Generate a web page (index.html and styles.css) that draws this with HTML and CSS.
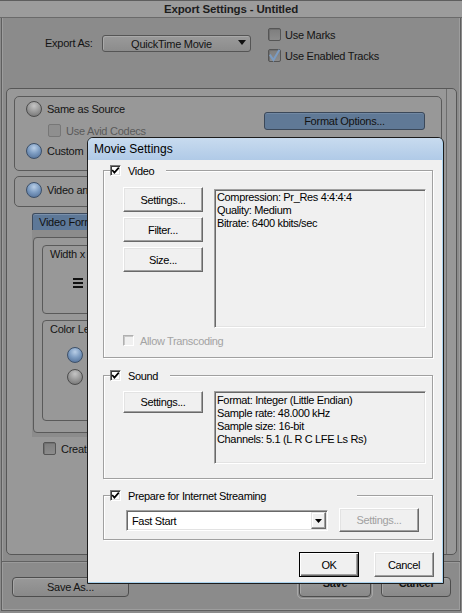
FILE: index.html
```html
<!DOCTYPE html>
<html>
<head>
<meta charset="utf-8">
<title>Export Settings</title>
<link rel="stylesheet" href="styles.css">
</head>
<body>
<div class="win">
  <div class="titlebar">Export Settings - Untitled</div>
  <div class="frame">
    <div class="export-row">
      <span class="export-lbl">Export As:</span>
      <div class="gselect"><span class="gselect-text">QuickTime Movie</span><svg class="garrow" width="8" height="5" viewBox="0 0 8 5"><path d="M0 0H8L4 5Z" fill="#111"/></svg></div>
      <div class="gchecks">
        <div class="gcheck-row"><span class="gbox"></span><span>Use Marks</span></div>
        <div class="gcheck-row row2"><span class="gbox"><svg width="13" height="13" viewBox="0 0 13 13"><polyline points="1.8,5.6 5.4,11 11.4,0.8" fill="none" stroke="#7b9bc1" stroke-width="2"/></svg></span><span>Use Enabled Tracks</span></div>
      </div>
    </div>
    <div class="outer">
      <div class="scroll">
        <div class="panel p1">
          <div class="p1-left">
            <div class="radio-row"><span class="radio"></span><span>Same as Source</span></div>
            <div class="avid-row"><span class="gbox dis"></span><span>Use Avid Codecs</span></div>
            <div class="radio-row custom"><span class="radio blue"></span><span>Custom</span></div>
          </div>
          <div class="fmt-btn">Format Options...</div>
        </div>
        <div class="panel p2">
          <div class="radio-row"><span class="radio blue"></span><span>Video and Audio</span></div>
        </div>
        <div class="tab">Video Format</div>
        <div class="tabwrap">
          <div class="tabpanel">
            <div class="box wbox">
              <div class="box-title">Width x Height</div>
              <div class="bars"><i></i><i></i><i></i></div>
            </div>
            <div class="box cbox">
              <div class="box-title">Color Levels</div>
              <span class="radio blue r-a"></span>
              <span class="radio r-b"></span>
            </div>
          </div>
        </div>
        <div class="create-row"><span class="gbox"></span><span>Create Video Mixdown</span></div>
      </div>
    </div>
    <div class="sep"></div>
    <div class="btn-row">
      <div class="gbtn saveas">Save As...</div>
      <div class="ring"><div class="gbtn save">Save</div></div>
      <div class="gbtn cancel">Cancel</div>
    </div>
  </div>
</div>

<div class="dlg">
  <div class="dlg-title">Movie Settings</div>
  <div class="dlg-body">
    <div class="group g-video">
      <div class="legend lg-video"><span class="wchk"><svg width="9" height="9" viewBox="0 0 9 9"><polyline points="1.2,4 3.4,6.6 7.8,1.6" fill="none" stroke="#000" stroke-width="1.7"/></svg></span><span>Video</span></div>
      <div class="vg-row">
        <div class="btn-col">
          <div class="wbtn vbtn">Settings...</div>
          <div class="wbtn vbtn">Filter...</div>
          <div class="wbtn vbtn">Size...</div>
        </div>
        <div class="info info-video">Compression: Pr_Res 4:4:4:4<br>Quality: Medium<br>Bitrate: 6400 kbits/sec</div>
      </div>
      <div class="allow-row"><span class="wchk dis"></span><span>Allow Transcoding</span></div>
    </div>

    <div class="group g-sound">
      <div class="legend lg-sound"><span class="wchk"><svg width="9" height="9" viewBox="0 0 9 9"><polyline points="1.2,4 3.4,6.6 7.8,1.6" fill="none" stroke="#000" stroke-width="1.7"/></svg></span><span>Sound</span></div>
      <div class="sg-row">
        <div class="wbtn sbtn">Settings...</div>
        <div class="info info-sound">Format: Integer (Little Endian)<br>Sample rate: 48.000 kHz<br>Sample size: 16-bit<br>Channels: 5.1 (L R C LFE Ls Rs)</div>
      </div>
    </div>

    <div class="group g-stream">
      <div class="legend lg-stream"><span class="wchk"><svg width="9" height="9" viewBox="0 0 9 9"><polyline points="1.2,4 3.4,6.6 7.8,1.6" fill="none" stroke="#000" stroke-width="1.7"/></svg></span><span>Prepare for Internet Streaming</span></div>
      <div class="st-row">
        <div class="combo"><span class="combo-text">Fast Start</span><span class="combo-arrow"><svg width="7" height="4" viewBox="0 0 7 4"><path d="M0 0H7L3.5 4Z" fill="#000"/></svg></span></div>
        <div class="wbtn stbtn disabled">Settings...</div>
      </div>
    </div>

    <div class="ok-row">
      <div class="wbtn okbtn default">OK</div>
      <div class="wbtn okbtn">Cancel</div>
    </div>
  </div>
</div>
</body>
</html>
```

FILE: styles.css
```css
* { box-sizing: border-box; }
html, body { margin: 0; padding: 0; }
body {
  width: 462px;
  height: 613px;
  overflow: hidden;
  position: relative;
  background: #8b8b8b;
  font-family: "Liberation Sans", Arial, sans-serif;
  font-size: 11px;
  color: #141414;
  letter-spacing: -0.25px;
}

/* ---------- background window ---------- */
.win { height: 613px; display: flex; flex-direction: column; }
.titlebar {
  height: 18px;
  flex: none;
  background: #9c9c9c;
  border-top: 1px solid #5e5e5e;
  border-bottom: 1px solid #6a6a6a;
  text-align: center;
  font-weight: bold;
  font-size: 11.5px;
  line-height: 16px;
  color: #1d1d1d;
  letter-spacing: -0.15px;
}
.frame {
  flex: 1;
  margin: 0 1px 2px 1px;
  border: 1px solid #5f5f5f;
  border-top: none;
  background: #8b8b8b;
  display: flex;
  flex-direction: column;
  box-shadow: inset 1px 0 0 #9d9d9d, inset -1px 0 0 #9d9d9d, inset 0 -1px 0 #9d9d9d;
}
.export-row {
  height: 70px;
  flex: none;
  display: flex;
  align-items: flex-start;
  padding-left: 43px;
}
.export-lbl { width: 57px; margin-top: 19px; line-height: 12px; }
.gselect {
  margin-top: 17px;
  width: 149px;
  height: 17px;
  border: 1px solid #555;
  border-radius: 3px;
  background: linear-gradient(#9a9a9a, #8c8c8c);
  box-shadow: inset 1px 1px 0 #a9a9a9;
  display: flex;
  align-items: center;
}
.gselect-text { flex: 1; text-align: center; padding-left: 2px; }
.garrow { margin: -3px 4px 0 0; }
.gchecks { margin-left: 17px; margin-top: 10px; }
.gcheck-row { display: flex; align-items: center; gap: 4px; height: 13px; }
.gcheck-row.row2 { margin-top: 8px; }
.gbox {
  width: 13px;
  height: 13px;
  flex: none;
  border: 1px solid #555;
  border-radius: 2px;
  background: linear-gradient(#7e7e7e, #8c8c8c);
  box-shadow: inset 1px 1px 0 #707070;
  position: relative;
}
.gbox svg { position: absolute; left: -1px; top: -1px; }
.gbox.dis { border-color: #777; background: #8f8f8f; box-shadow: none; }

.outer {
  flex: none;
  height: 467px;
  margin: 0 3px 0 4px;
  border: 1px solid #575757;
  border-radius: 5px;
  background: #989898;
  display: flex;
}
.scroll {
  width: 440px;
  border-right: 1px solid #6e6e6e;
  display: flex;
  flex-direction: column;
  padding-left: 7px;
}
.panel {
  width: 428px;
  border: 1px solid #5a5a5a;
  border-radius: 5px;
  flex: none;
}
.p1 { margin-top: 7px; height: 75px; display: flex; align-items: flex-start; }
.p1-left { padding: 4px 0 0 11px; }
.radio-row { display: flex; align-items: center; gap: 5px; height: 16px; white-space: nowrap; }
.avid-row { display: flex; align-items: center; gap: 5px; height: 13px; margin: 7px 0 0 22px; color: #5a5a5a; }
.radio-row.custom { margin-top: 6px; }
.radio {
  width: 16px;
  height: 16px;
  flex: none;
  border-radius: 50%;
  border: 1px solid #4c4c4c;
  background: radial-gradient(circle at 50% 28%, #c4c4c4 0, #9c9c9c 45%, #6c6c6c 100%);
}
.radio.blue {
  border-color: #3d5069;
  background: radial-gradient(circle at 50% 28%, #b9cee6 0, #7e9dc2 45%, #4b6890 100%);
}
.fmt-btn {
  margin: 15px 16px 0 auto;
  width: 161px;
  height: 18px;
  border: 1px solid #3b4859;
  border-radius: 3px;
  background: #607996;
  box-shadow: inset 0 1px 0 #7188a3;
  text-align: center;
  line-height: 16px;
  color: #121212;
}
.p2 { margin-top: 5px; height: 31px; padding: 5px 0 0 11px; overflow: hidden; }
.tab {
  margin: 6px 0 0 18px;
  width: 110px;
  height: 17px;
  flex: none;
  background: #5d7898;
  border: 1px solid #3c4a5d;
  border-bottom: none;
  border-radius: 3px 3px 0 0;
  padding-left: 6px;
  line-height: 16px;
  color: #111;
  box-shadow: inset 0 1px 0 #7a90ab;
}
.tabwrap {
  margin-left: 18px;
  width: 410px;
  flex: none;
  background: #8c8c8c;
  padding: 7px 0 4px 1px;
}
.tabpanel {
  height: 196px;
  border: 1px solid #5a5a5a;
  border-radius: 4px;
  background: #989898;
  padding: 7px 0 0 8px;
}
.box {
  width: 380px;
  border: 1px solid #5a5a5a;
  border-radius: 4px;
  position: relative;
}
.wbox { height: 69px; }
.cbox { height: 101px; margin-top: 6px; }
.box-title { padding: 2px 0 0 7px; line-height: 12px; }
.bars { margin: 18px 0 0 30px; width: 10px; display: flex; flex-direction: column; gap: 2px; }
.bars i { display: block; height: 2px; background: #111; }
.cbox .radio { position: absolute; left: 24px; }
.cbox .r-a { top: 26px; }
.cbox .r-b { top: 48px; }
.create-row { display: flex; align-items: center; gap: 5px; height: 13px; margin: 5px 0 0 29px; white-space: nowrap; }

.sep { flex: none; height: 2px; margin-top: 6px; border-top: 1px solid #616161; border-bottom: 1px solid #9a9a9a; }
.btn-row { flex: none; display: flex; align-items: center; margin-top: 14px; height: 20px; padding: 0 9px 0 10px; }
.gbtn {
  height: 20px;
  border: 1px solid #4d4d4d;
  border-radius: 4px;
  background: linear-gradient(#999, #898989);
  box-shadow: inset 1px 1px 0 #a6a6a6;
  text-align: center;
  line-height: 18px;
}
.saveas { width: 117px; }
.ring { margin-left: auto; padding: 1px; border: 1px solid #a8a8a8; border-radius: 5px; }
.save { width: 72px; font-weight: bold; line-height: 11px; }
.cancel { width: 70px; margin-left: 8px; font-weight: bold; line-height: 11px; }

/* ---------- Movie Settings dialog (overlay) ---------- */
.dlg {
  position: absolute;
  left: 87px;
  top: 137px;
  width: 357px;
  height: 447px;
  border: 1px solid #1c1c1c;
  border-radius: 6px 6px 0 0;
  background: #aad3ef;
  padding: 0 1px 1px 0;
  display: flex;
  flex-direction: column;
  overflow: hidden;
  color: #000;
  letter-spacing: -0.35px;
}
.dlg-title {
  height: 22px;
  flex: none;
  background: linear-gradient(#c8dbef, #b0cae7);
  padding-left: 6px;
  line-height: 22px;
  font-size: 12px;
  letter-spacing: 0;
}
.dlg-body {
  flex: 1;
  background: #f0f0f0;
  display: flex;
  flex-direction: column;
  padding-left: 15px;
}
.group {
  position: relative;
  width: 330px;
  flex: none;
  border: 1px solid #a0a0a0;
  box-shadow: inset 1px 1px 0 #fff, 1px 1px 0 #fff;
}
.g-video { margin-top: 10px; height: 188px; }
.g-sound { margin-top: 17px; height: 104px; }
.g-stream { margin-top: 16px; height: 45px; }
.legend {
  position: absolute;
  left: 6px;
  top: -6px;
  height: 11px;
  display: flex;
  align-items: center;
  gap: 7px;
  background: #f0f0f0;
  white-space: nowrap;
}
.lg-video { width: 56px; }
.lg-sound { width: 60px; }
.lg-stream { width: 247px; }
.wchk {
  width: 11px;
  height: 11px;
  flex: none;
  background: #fff;
  border: 1px solid;
  border-color: #7a7a7a #fff #fff #7a7a7a;
  box-shadow: inset 1px 1px 0 #3c3c3c, inset -1px -1px 0 #dcdcdc;
  position: relative;
}
.wchk svg { position: absolute; left: 0; top: 0; }
.wchk.dis { background: #f0f0f0; border-color: #b0b0b0 #fff #fff #b0b0b0; box-shadow: inset 1px 1px 0 #c8c8c8; }
.vg-row { display: flex; align-items: flex-start; padding: 16px 0 0 19px; }
.btn-col { display: flex; flex-direction: column; gap: 5px; width: 80px; }
.wbtn {
  background: #f0f0f0;
  border: 1px solid;
  border-color: #fff #696969 #696969 #fff;
  box-shadow: inset -1px -1px 0 #a0a0a0, inset 1px 1px 0 #e3e3e3;
  display: flex;
  align-items: center;
  justify-content: center;
}
.vbtn { height: 25px; }
.info {
  margin-left: 11px;
  width: 212px;
  border: 1px solid;
  border-color: #a0a0a0 #fff #fff #a0a0a0;
  box-shadow: inset 1px 1px 0 #696969, inset -1px -1px 0 #e3e3e3;
  padding: 1px 2px 0 2px;
  line-height: 13px;
  white-space: nowrap;
}
.info-video { margin-top: 2px; height: 139px; }
.allow-row { display: flex; align-items: center; gap: 6px; height: 11px; margin: 7px 0 0 19px; color: #a3a3a3; }
.sg-row { display: flex; align-items: flex-start; padding: 15px 0 0 19px; }
.sbtn { width: 80px; height: 22px; }
.info-sound { height: 73px; padding-top: 2px; }
.st-row { display: flex; align-items: flex-start; padding: 14px 0 0 22px; }
.combo {
  width: 202px;
  height: 21px;
  background: #fff;
  border: 1px solid;
  border-color: #a0a0a0 #fff #fff #a0a0a0;
  box-shadow: inset 1px 1px 0 #696969, inset -1px -1px 0 #e3e3e3;
  display: flex;
  align-items: center;
  padding: 1px;
}
.combo-text { flex: 1; padding-left: 4px; }
.combo-arrow {
  width: 15px;
  height: 17px;
  flex: none;
  background: #f0f0f0;
  border: 1px solid;
  border-color: #e3e3e3 #696969 #696969 #e3e3e3;
  box-shadow: inset -1px -1px 0 #a0a0a0, inset 1px 1px 0 #fff;
  display: flex;
  align-items: center;
  justify-content: center;
}
.stbtn { width: 80px; height: 24px; margin: -2px 0 0 11px; }
.wbtn.disabled { color: #a0a0a0; }
.ok-row { display: flex; justify-content: flex-end; gap: 15px; padding-right: 8px; margin-top: 12px; }
.okbtn { width: 60px; height: 25px; }
.wbtn.default {
  border-color: #000;
  box-shadow: inset 1px 1px 0 #fff, inset -1px -1px 0 #696969, inset -2px -2px 0 #a0a0a0;
}
```
